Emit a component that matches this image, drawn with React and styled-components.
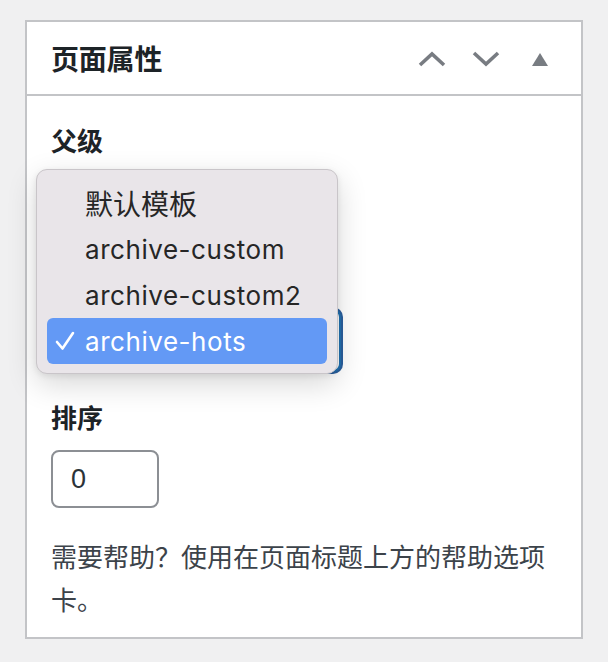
import React from "react";
import styled, { createGlobalStyle } from "styled-components";

const Global = createGlobalStyle`
  html, body { margin: 0; padding: 0; background: #f0f0f1; }
  body { font-family: "Noto Sans CJK SC", "Liberation Sans", sans-serif; }
  * { box-sizing: border-box; }
`;

const Page = styled.div`
  padding: 20px 25px 0 25px;
  width: 608px;
  height: 662px;
  overflow: hidden;
`;

const Panel = styled.section`
  background: #fff;
  border: 2px solid #c3c4c7;
  width: 558px;
`;

const Header = styled.header`
  display: flex;
  align-items: center;
  height: 74px;
  padding: 0 24px 0 24px;
  border-bottom: 2px solid #c3c4c7;
`;

const Title = styled.h2`
  flex: 1;
  margin: 0;
  font-size: 28px;
  font-weight: 700;
  color: #1d2327;
  font-family: "Noto Sans CJK SC", sans-serif;
  letter-spacing: -0.2px;
`;

const Actions = styled.div`
  display: flex;
  align-items: center;
  gap: 24px;
  margin-right: 2px;
  margin-top: 2px;
`;

const IconBtn = styled.span`
  display: flex;
  width: ${(p) => p.$w}px;
  justify-content: center;
  color: #787c82;
`;

const Body = styled.div`
  position: relative;
  padding: 26px 24px 17px 24px;
`;

const Label = styled.div`
  font-size: 26px;
  line-height: 36px;
  font-weight: 700;
  color: #1d2327;
  margin-top: ${(p) => p.$mt || 0}px;
`;

const SelectBox = styled.div`
  margin-top: ${(p) => p.$mt}px;
  width: 290px;
  height: 63px;
  border-radius: 8px;
  border: 2px solid #2271b1;
  box-shadow: 0 0 0 2px #2a5f9e;
  background: #fff;
`;

const NumberInput = styled.div`
  margin-top: 15px;
  width: 108px;
  height: 58px;
  border: 2px solid #8c8f94;
  border-radius: 8px;
  display: flex;
  align-items: center;
  padding-left: 18px;
  font-family: "Liberation Sans", sans-serif;
  font-size: 27px;
  color: #2c3338;
`;

const Help = styled.p`
  margin: 26px 0 0 0;
  font-size: 26px;
  line-height: 43px;
  color: #3c434a;
  font-family: "Noto Sans CJK SC", sans-serif;
`;

const Menu = styled.ul`
  position: absolute;
  left: 9px;
  top: 73px;
  width: 302px;
  margin: 0;
  padding: 10px 10px 9px 10px;
  list-style: none;
  background: #e9e5e9;
  border: 1px solid #c9c5c9;
  border-radius: 11px;
  box-shadow: 0 10px 30px rgba(0, 0, 0, 0.16), 0 2px 6px rgba(0, 0, 0, 0.08);
`;

const Item = styled.li`
  display: flex;
  align-items: center;
  height: 46px;
  border-radius: 6px;
  padding-left: 8px;
  background: ${(p) => (p.$sel ? "#6399f5" : "transparent")};
  color: ${(p) => (p.$sel ? "#fff" : "#262626")};
  font-family: "Inter", "Noto Sans CJK SC", sans-serif;
  font-size: ${(p) => (p.$cjk ? 28 : 26)}px;
  letter-spacing: ${(p) => (p.$cjk ? 0 : 0.55)}px;
`;

const Check = styled.span`
  width: 30px;
  flex-shrink: 0;
  display: flex;
  align-items: center;
`;

const items = [
  { t: "默认模板", cjk: true },
  { t: "archive-custom" },
  { t: "archive-custom2" },
  { t: "archive-hots", sel: true },
];

export default function App() {
  return (
    <>
      <Global />
      <Page>
        <Panel>
          <Header>
            <Title>页面属性</Title>
            <Actions>
              <IconBtn $w={30}>
                <svg width="28" height="16" viewBox="0 0 28 16">
                  <path d="M2 14 L14 3 L26 14" fill="none" stroke="currentColor" strokeWidth="3.6" />
                </svg>
              </IconBtn>
              <IconBtn $w={30}>
                <svg width="28" height="16" viewBox="0 0 28 16">
                  <path d="M2 2 L14 13 L26 2" fill="none" stroke="currentColor" strokeWidth="3.6" />
                </svg>
              </IconBtn>
              <IconBtn $w={30}>
                <svg width="16" height="13" viewBox="0 0 16 13">
                  <path d="M8 0 L16 13 L0 13 Z" fill="currentColor" />
                </svg>
              </IconBtn>
            </Actions>
          </Header>
          <Body>
            <Label>父级</Label>
            <SelectBox $mt={151} />
            <Label $mt={27}>排序</Label>
            <NumberInput>0</NumberInput>
            <Help>需要帮助？使用在页面标题上方的帮助选项卡。</Help>
            <Menu>
              {items.map(({ t, cjk, sel }) => (
                <Item key={t} $sel={sel} $cjk={cjk}>
                  <Check>
                    {sel && (
                      <svg width="20" height="20" viewBox="0 0 20 20">
                        <path d="M2 11 L7.5 17.5 L18 2" fill="none" stroke="#fff" strokeWidth="2.6" strokeLinecap="round" strokeLinejoin="round" />
                      </svg>
                    )}
                  </Check>
                  {t}
                </Item>
              ))}
            </Menu>
          </Body>
        </Panel>
      </Page>
    </>
  );
}
